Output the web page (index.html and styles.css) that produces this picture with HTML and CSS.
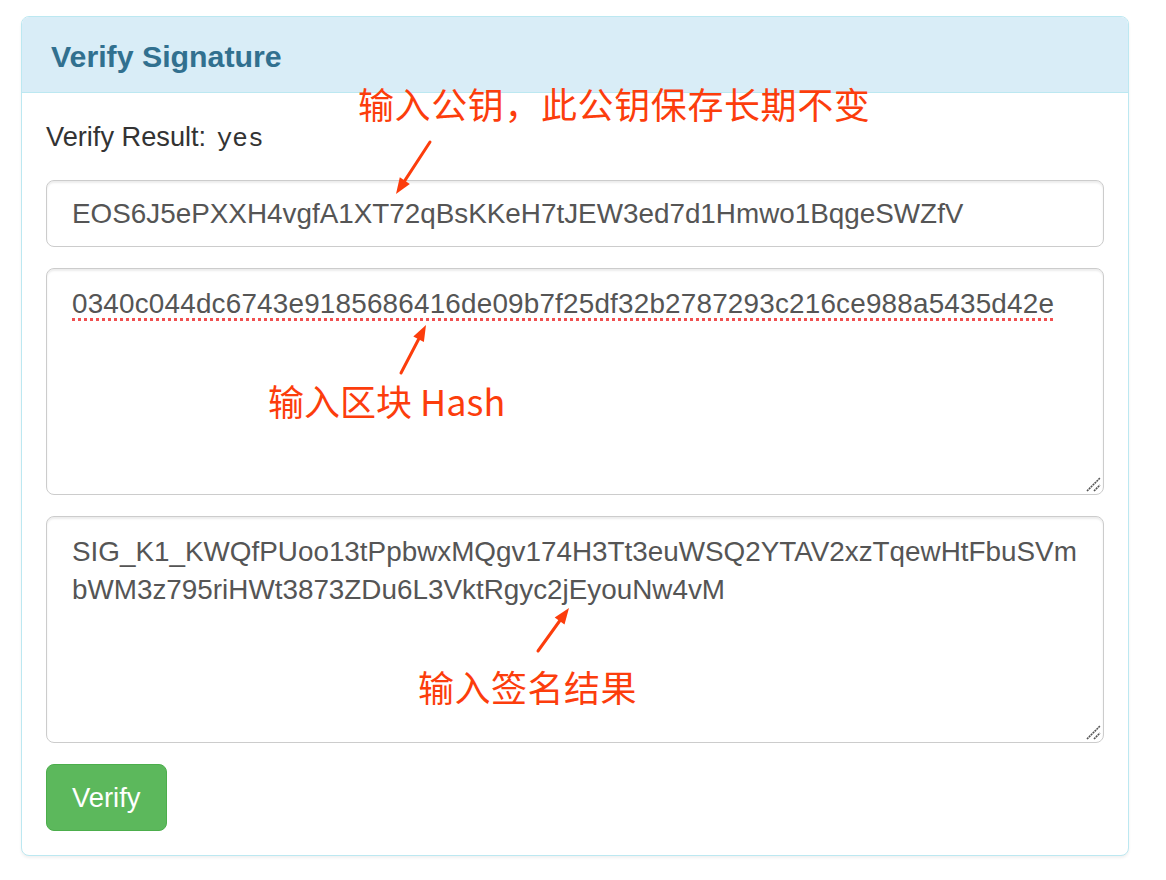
FILE: index.html
```html
<!DOCTYPE html>
<html>
<head>
<meta charset="utf-8">
<link rel="stylesheet" href="styles.css">
</head>
<body>
<div class="page">
  <div class="panel">
    <div class="panel-heading"><h3 class="panel-title">Verify Signature</h3></div>
    <div class="panel-body">
      <div class="result"><span class="label">Verify Result:</span> <code class="mono">yes</code></div>
      <div class="field input">EOS6J5ePXXH4vgfA1XT72qBsKKeH7tJEW3ed7d1Hmwo1BqgeSWZfV</div>
      <div class="field area"><span class="spell">0340c044dc6743e9185686416de09b7f25df32b2787293c216ce988a5435d42e</span>
        <svg class="grip" width="16" height="16" viewBox="0 0 16 16"><path d="M2 15 L15 2 M9 15 L15 9" stroke="#555" stroke-width="1.6" stroke-dasharray="2 0.7"/></svg>
      </div>
      <div class="field area">SIG_K1_KWQfPUoo13tPpbwxMQgv174H3Tt3euWSQ2YTAV2xzTqewHtFbuSVm<br>bWM3z795riHWt3873ZDu6L3VktRgyc2jEyouNw4vM
        <svg class="grip" width="16" height="16" viewBox="0 0 16 16"><path d="M2 15 L15 2 M9 15 L15 9" stroke="#555" stroke-width="1.6" stroke-dasharray="2 0.7"/></svg>
      </div>
      <div class="actions"><button class="btn">Verify</button></div>
    </div>
  </div>

  <div class="note note-1">输入公钥，此公钥保存长期不变</div>
  <div class="note note-2">输入区块 Hash</div>
  <div class="note note-3">输入签名结果</div>

  <svg class="arrows" width="1166" height="880" viewBox="0 0 1166 880">
    <g stroke="#fc3d0c" stroke-width="3" stroke-linecap="round" fill="#fc3d0c">
      <line x1="430" y1="142" x2="404.8" y2="180.6"/>
      <polygon stroke="none" points="396,194 409.8,183.9 399.8,177.3"/>
      <line x1="401" y1="373" x2="418.6" y2="339.2"/>
      <polygon stroke="none" points="426,325 423.9,342 413.3,336.4"/>
      <line x1="538" y1="651" x2="559.6" y2="621"/>
      <polygon stroke="none" points="569,608 564.5,624.5 554.7,617.5"/>
    </g>
  </svg>
</div>
</body>
</html>
```

FILE: styles.css
```css
* { box-sizing: border-box; }
html, body { margin: 0; padding: 0; background: #fff; }
body {
  font-family: "Liberation Sans", Arial, sans-serif;
  color: #333;
  width: 1166px;
  height: 880px;
  overflow: hidden;
}
.page {
  position: relative;
  width: 1166px;
  height: 880px;
  padding: 16px 37px 0 21px;
}
.panel {
  width: 1108px;
  border: 1px solid #bce8f1;
  border-radius: 8px;
  background: #fff;
  box-shadow: 0 2px 3px rgba(0,0,0,0.06);
}
.panel-heading {
  height: 76px;
  background: #d9edf7;
  border-bottom: 1px solid #bce8f1;
  border-radius: 7px 7px 0 0;
  display: flex;
  align-items: center;
  padding: 0 29px;
}
.panel-title {
  margin: 0;
  font-size: 30.3px;
  font-weight: bold;
  color: #31708f;
  position: relative;
  top: 2px;
}
.panel-body {
  padding: 24px;
  display: flex;
  flex-direction: column;
  gap: 21px;
}
.result {
  font-size: 27.2px;
  line-height: 40px;
  height: 40px;
  color: #333;
  margin-bottom: 2px;
}
.mono {
  font-family: "Liberation Mono", "Courier New", monospace;
  font-size: 26px;
  color: #333;
  margin-left: 3px;
}
.field {
  border: 1.5px solid #ccc;
  border-radius: 8px;
  background: #fff;
  color: #555;
  font-size: 27.85px;
  box-shadow: inset 0 2px 2px rgba(0,0,0,0.075);
  position: relative;
}
.input {
  height: 67px;
  padding: 0 25px;
  display: flex;
  align-items: center;
}
.area {
  height: 227px;
  padding: 16px 25px;
  line-height: 38px;
}
.spell {
  letter-spacing: 0.2px;
  text-decoration: underline dotted #f05050;
  text-decoration-thickness: 3px;
  text-underline-offset: 5px;
}
.grip {
  position: absolute;
  right: 2px;
  bottom: 2px;
}
.actions { display: flex; }
.btn {
  height: 67px;
  padding: 0 25px;
  background: #5cb85c;
  border: 1.5px solid #4cae4c;
  border-radius: 8px;
  color: #fff;
  font-family: "Liberation Sans", Arial, sans-serif;
  font-size: 27.4px;
}
.note {
  position: absolute;
  font-family: "Noto Sans CJK SC", "Noto Sans", sans-serif;
  font-size: 36px;
  line-height: 36px;
  color: #fc3d0c;
  white-space: nowrap;
}
.note-1 { left: 358px; top: 85px; letter-spacing: 0.6px; }
.note-2 { left: 268px; top: 382px; }
.note-3 { left: 418px; top: 668px; letter-spacing: 0.5px; }
.arrows {
  position: absolute;
  left: 0;
  top: 0;
  pointer-events: none;
}
```
